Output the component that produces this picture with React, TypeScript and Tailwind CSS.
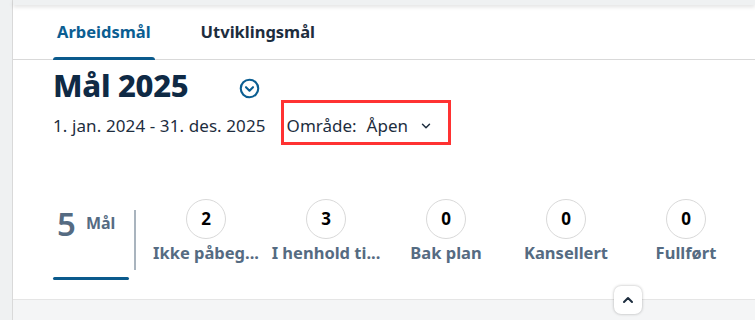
import { ChevronDown, ChevronUp } from "lucide-react";

const stats = [
  { count: 2, label: "Ikke påbeg..." },
  { count: 3, label: "I henhold ti..." },
  { count: 0, label: "Bak plan" },
  { count: 0, label: "Kansellert" },
  { count: 0, label: "Fullført" },
];

const CircleChevron = () => (
  <svg width="21" height="21" viewBox="0 0 24 24" fill="none" stroke="#0b5e92" strokeWidth="2.4" strokeLinecap="round" strokeLinejoin="round">
    <circle cx="12" cy="12" r="10" />
    <path d="M8 10.5l4 4 4-4" />
  </svg>
);

export default function App() {
  return (
    <div
      className="w-[755px] h-[320px] overflow-hidden bg-[#f4f5f6] flex"
      style={{ fontFamily: '"Noto Sans", "Open Sans", sans-serif' }}
    >
      <div className="w-[12px] shrink-0 bg-[#eff1f2]" />
      <div className="flex-1 flex flex-col border-l border-[#d9d9d9]">
        <div className="h-[5px] bg-[#eff1f2] shadow-[0_2px_4px_rgba(0,0,0,0.12)] z-10" />
        <div className="bg-white relative">
          {/* tabs */}
          <div className="h-[55px] flex items-stretch gap-[46px] pl-[40px] border-b border-[#d9d9d9]">
            <div className="relative flex items-center px-[4px] text-[16.5px] font-bold text-[#0b5e92]">
              Arbeidsmål
              <div className="absolute left-0 right-0 bottom-[-1px] h-[3px] bg-[#0b5a8c] rounded-t-sm" />
            </div>
            <div className="flex items-center text-[16.5px] font-bold text-[#1d2d3e]">Utviklingsmål</div>
          </div>

          {/* title */}
          <div className="pl-[40px] pt-[10px]">
            <div className="flex items-center h-[30px]">
              <h1 className="text-[31px] font-extrabold text-[#0f2a45] leading-none tracking-[-0.3px]">Mål 2025</h1>
              <div className="ml-[51px] mt-[6px] flex items-center">
                <CircleChevron />
              </div>
            </div>
            <div className="flex items-center h-[45px]">
              <span className="text-[17px] text-[#1d2d3e] pt-[6px] tracking-[0.1px]">1. jan. 2024 - 31. des. 2025</span>
              <div className="ml-[15px] h-[45px] w-[170px] border-[3px] border-[#ff3232] flex items-center pl-[3px] pt-[6px]">
                <span className="text-[17px] text-[#1d2d3e]">Område:</span>
                <span className="text-[17px] text-[#1d2d3e] ml-[10px]">Åpen</span>
                <ChevronDown className="w-[14px] h-[14px] ml-[11px] text-[#1d2d3e]" strokeWidth={2.5} />
              </div>
            </div>
          </div>

          {/* stats */}
          <div className="pl-[40px] mt-[54px] h-[100px] flex">
            <div className="flex">
              <div className="relative w-[76px] flex items-start pt-[8px] pl-[4px]">
                <span className="text-[33px] font-semibold text-[#556b82] leading-none">5</span>
                <span className="text-[16px] font-bold text-[#556b82] ml-[10px] mt-[4px]">Mål</span>
                <div className="absolute left-0 right-0 top-[78px] h-[3px] bg-[#0b5a8c] rounded-sm" />
              </div>
              <div className="w-[2px] h-[60px] bg-[#a9b4be] mt-[11px] ml-[5px]" />
            </div>
            <div className="flex ml-[10px]">
              {stats.map((s) => (
                <div key={s.label} className="w-[120px] flex flex-col items-center">
                  <div className="w-[40px] h-[40px] rounded-full border border-[#d9d9d9] flex items-center justify-center text-[17px] font-bold text-black">
                    {s.count}
                  </div>
                  <div className="mt-[2px] text-[16.5px] leading-[24px] font-bold text-[#556b82] whitespace-nowrap">{s.label}</div>
                </div>
              ))}
            </div>
          </div>

          <button className="absolute left-[601px] bottom-[-15px] w-[28px] h-[28px] bg-white rounded-[7px] shadow-[0_0_3px_rgba(0,0,0,0.3)] flex items-center justify-center z-20">
            <ChevronUp className="w-[16px] h-[16px] text-[#1d2d3e]" strokeWidth={3} />
          </button>
        </div>
        <div className="flex-1 border-t border-[#e5e5e5] bg-[#f4f5f6]" />
      </div>
    </div>
  );
}
